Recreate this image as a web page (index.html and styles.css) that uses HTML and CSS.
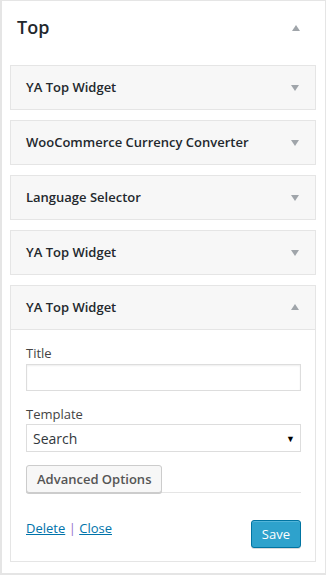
FILE: index.html
```html
<!DOCTYPE html>
<html lang="en">
<head>
    <meta charset="UTF-8">
    <meta name="viewport" content="width=device-width, initial-scale=1.0">
    <title>Widgets - Top</title>
    <link rel="stylesheet" href="styles.css">
</head>
<body>
    <div class="sidebar">
        <div class="sidebar-head">
            <h2>Top</h2>
            <span class="arrow up"></span>
        </div>

        <div class="widget">
            <div class="widget-top">
                <h3>YA Top Widget</h3>
                <span class="arrow down"></span>
            </div>
        </div>
        <div class="widget">
            <div class="widget-top">
                <h3>WooCommerce Currency Converter</h3>
                <span class="arrow down"></span>
            </div>
        </div>
        <div class="widget">
            <div class="widget-top">
                <h3>Language Selector</h3>
                <span class="arrow down"></span>
            </div>
        </div>
        <div class="widget">
            <div class="widget-top">
                <h3>YA Top Widget</h3>
                <span class="arrow down"></span>
            </div>
        </div>

        <!-- widget đang mở -->
        <div class="widget open">
            <div class="widget-top">
                <h3>YA Top Widget</h3>
                <span class="arrow up"></span>
            </div>
            <div class="widget-inside">
                <label class="field-label" for="title">Title</label>
                <input type="text" id="title" class="field">

                <label class="field-label tpl" for="template">Template</label>
                <div class="select-wrap">
                    <select id="template" class="field select">
                        <option>Search</option>
                    </select>
                    <span class="select-arrow">&#9660;</span>
                </div>

                <div class="advanced">
                    <button class="btn-adv">Advanced Options</button>
                </div>

                <div class="widget-control">
                    <div class="links">
                        <a href="#">Delete</a> <span class="sep">|</span> <a href="#">Close</a>
                    </div>
                    <button class="btn-save">Save</button>
                </div>
            </div>
        </div>
    </div>
</body>
</html>
```

FILE: styles.css
```css
body {
    font-family: 'Open Sans', sans-serif;
    margin: 0;
    padding: 0;
    background: #fff;
    color: #23282d;
}
.sidebar {
    width: 326px;
    height: 575px;
    box-sizing: border-box;
    border: 1px solid #e5e5e5;
    border-left-width: 2px;
    border-bottom-width: 2px;
    padding: 0 9px 0 8px;
    background: #fff;
}
.sidebar-head {
    height: 54px;
    margin-bottom: 10px;
    padding-left: 7px;
    padding-right: 16px;
    display: flex;
    align-items: center;
    justify-content: space-between;
}
.sidebar-head h2 {
    margin: 0 0 3px;
    font-size: 18px;
    font-weight: 600;
    color: #23282d;
}
.arrow {
    width: 0;
    height: 0;
    border-left: 4px solid transparent;
    border-right: 4px solid transparent;
}
.arrow.up {
    border-bottom: 6px solid #a0a5aa;
}
.arrow.down {
    border-top: 6px solid #a0a5aa;
}
.widget {
    border: 1px solid #e5e5e5;
    background: #f7f7f7;
    margin-bottom: 10px;
}
.widget-top {
    height: 43px;
    padding: 0 16px 0 15px;
    display: flex;
    align-items: center;
    justify-content: space-between;
}
.widget-top h3 {
    margin: 0 0 2px;
    font-size: 13px;
    font-weight: 600;
    color: #23282d;
}
.widget.open .widget-top {
    border-bottom: 1px solid #e5e5e5;
}
.widget.open .arrow.up {
    margin-bottom: 2px;
}
.widget-inside {
    background: #fff;
    padding: 14px 14px 13px 15px;
}
.field-label {
    display: block;
    font-size: 13px;
    line-height: 18px;
    color: #444;
    margin-bottom: 2px;
}
.field-label.tpl {
    margin-top: 14px;
    margin-bottom: 1px;
}
.field {
    display: block;
    width: 100%;
    box-sizing: border-box;
    height: 27px;
    border: 1px solid #ddd;
    background: #fff;
    margin: 0;
    font-family: 'Open Sans', sans-serif;
    box-shadow: inset 0 1px 2px rgba(0, 0, 0, 0.07);
}
.select-wrap {
    position: relative;
}
.field.select {
    -webkit-appearance: none;
    appearance: none;
    height: 28px;
    padding: 0 6px;
    font-size: 14px;
    color: #32373c;
    box-shadow: none;
}
.select-arrow {
    position: absolute;
    right: 6px;
    top: 8px;
    font-size: 9px;
    color: #000;
    pointer-events: none;
}
.advanced {
    margin-top: 13px;
    border-bottom: 1px solid #e5e5e5;
}
.btn-adv {
    display: block;
    height: 28px;
    margin-bottom: -1px;
    padding: 0 10px;
    font-family: 'Open Sans', sans-serif;
    font-size: 13px;
    font-weight: 600;
    color: #555;
    background: #f7f7f7;
    border: 1px solid #ccc;
    border-radius: 3px;
    box-shadow: 0 1px 0 #ccc;
}
.widget-control {
    margin-top: 27px;
    display: flex;
    align-items: center;
    justify-content: space-between;
}
.links {
    font-size: 13px;
    margin-top: -13px;
}
.links a {
    color: #0073aa;
    text-decoration: underline;
}
.links .sep {
    color: #9575cd;
}
.btn-save {
    height: 28px;
    padding: 0 10px;
    font-family: 'Open Sans', sans-serif;
    font-size: 13px;
    color: #fff;
    background: #2ea2cc;
    border: 1px solid #0074a2;
    border-radius: 3px;
    box-shadow: inset 0 1px 0 rgba(120, 200, 230, 0.5), 0 1px 0 rgba(0, 0, 0, 0.15);
}
```
